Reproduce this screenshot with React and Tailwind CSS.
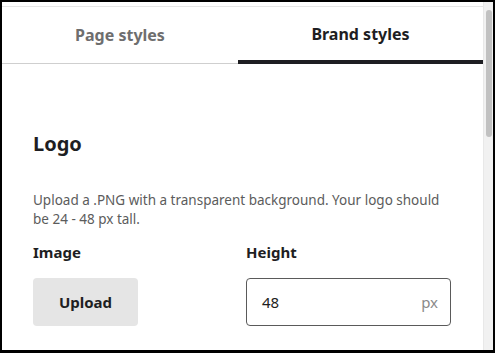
export default function App() {
  return (
    <div
      className="w-[495px] h-[353px] bg-black pt-[2px] pl-[2px] pr-[2px] pb-[3px]"
      style={{ fontFamily: "'Noto Sans', Lato, sans-serif" }}
    >
      <div className="flex h-full bg-white">
        <div className="flex-1 flex flex-col overflow-hidden">
          <div className="h-[4px]" />
          <div className="h-px bg-[#e6e6e6]" />
          <div className="flex h-[57px]">
            <div className="w-[236px] flex items-center justify-center border-b border-[#cfcfcf] text-[16px] font-bold text-[#6e6e6e]">
              Page styles
            </div>
            <div className="flex-1 flex items-center justify-center border-b-4 border-[#1e1e22] text-[16px] font-bold text-[#1e1e22]">
              Brand styles
            </div>
          </div>
          <div className="pl-[31px] pr-[20px]">
            <h2 className="mt-[66px] text-[20px] leading-[28px] font-bold text-[#1e1e22]">Logo</h2>
            <p className="mt-[33px] text-[13.5px] leading-[19px] text-[#5c5c5c] whitespace-nowrap">
              Upload a .PNG with a transparent background. Your logo should
              <br />
              be 24 - 48 px tall.
            </p>
            <div className="mt-[12px] flex">
              <div className="w-[213px]">
                <div className="text-[15px] leading-[22px] font-bold text-[#1e1e22]">Image</div>
                <button className="mt-[15px] w-[105px] h-[48px] rounded-[4px] bg-[#e5e5e5] text-[15px] font-bold text-[#1e1e22]">
                  Upload
                </button>
              </div>
              <div>
                <div className="text-[15px] leading-[22px] font-bold text-[#1e1e22]">Height</div>
                <div className="mt-[15px] w-[205px] h-[48px] rounded-[4px] border border-[#5a5a5a] flex items-center justify-between pl-[15px] pr-[12px]">
                  <span className="text-[15px] text-[#1e1e22]">48</span>
                  <span className="text-[15px] text-[#8a8a8a]">px</span>
                </div>
              </div>
            </div>
          </div>
        </div>
        <div className="w-[10px] bg-[#f1f1f1] border-l border-[#e8e8e8] pt-[8px] flex justify-center">
          <div className="w-[6px] h-[127px] rounded-[3px] bg-[#c1c1c1]" />
        </div>
      </div>
    </div>
  );
}
